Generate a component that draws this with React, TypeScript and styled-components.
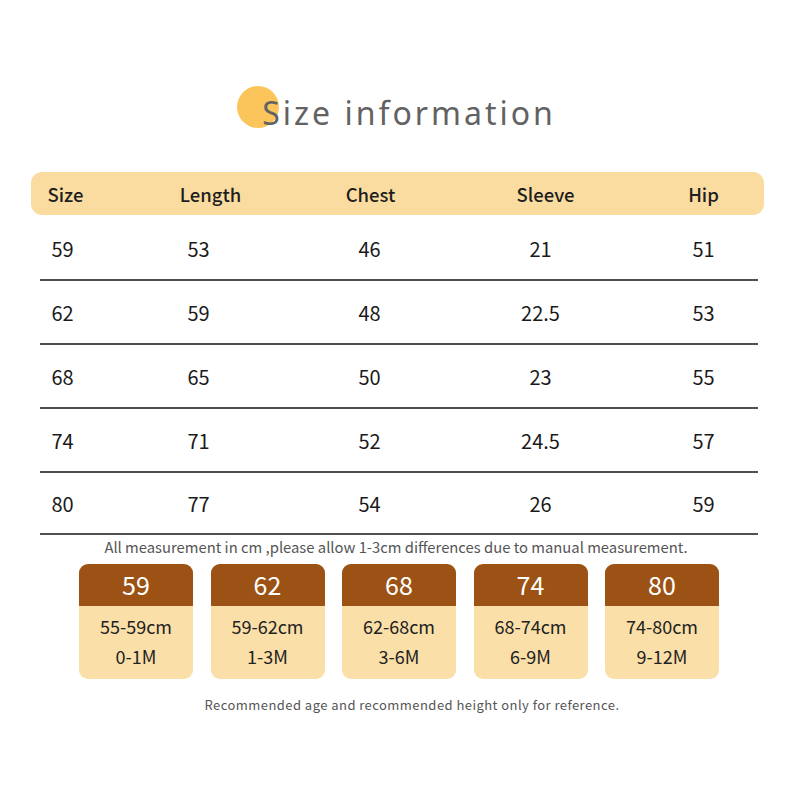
import React from "react";
import styled, { createGlobalStyle } from "styled-components";

const Global = createGlobalStyle`
  html, body { margin: 0; padding: 0; background: #ffffff; }
  body { width: 800px; height: 800px; overflow: hidden; }
`;

const Page = styled.div`
  width: 800px;
  height: 800px;
  background: #fff;
  display: flex;
  flex-direction: column;
  align-items: center;
  font-family: "Noto Sans CJK SC", "Noto Sans", sans-serif;
`;

const TitleRow = styled.div`
  margin-top: 88px;
  height: 50px;
  display: flex;
  align-items: center;
  justify-content: center;
  padding-left: 18px;
`;

const Title = styled.h1`
  position: relative;
  margin: 0;
  font-family: "Noto Sans", "DejaVu Sans", sans-serif;
  font-weight: 400;
  font-size: 32px;
  letter-spacing: 3px;
  color: #626262;
  line-height: 50px;
  &::before {
    content: "";
    position: absolute;
    left: -25px;
    top: -2px;
    width: 42px;
    height: 42px;
    border-radius: 50%;
    background: #fbc55c;
    z-index: 0;
  }
  span { position: relative; z-index: 1; }
`;

const Table = styled.div`
  margin-top: 34px;
  width: 733px;
  margin-left: -6px;
  display: flex;
  flex-direction: column;
  align-items: stretch;
`;

const HeaderBar = styled.div`
  display: grid;
  grid-template-columns: 70px 220px 100px 250px 66px;
  height: 43px;
  align-items: center;
  background: #fadca0;
  border-radius: 11px;
  margin-bottom: 2px;
`;

const HeadCell = styled.div`
  text-align: center;
  font-size: 18.5px;
  font-weight: 500;
  color: #1e1e1e;
`;

const Row = styled.div`
  display: grid;
  grid-template-columns: 46px 226px 116px 226px 100px;
  height: 62px;
  align-items: center;
  border-bottom: 2px solid #505050;
  margin: 0 6px 0 9px;
  &:last-child { height: 60px; }
`;

const Cell = styled.div`
  text-align: center;
  font-size: 20px;
  color: #1a1a1a;
`;

const Note = styled.p`
  margin: 2px 0 0 0;
  font-size: 14.8px;
  color: #555;
  line-height: 20px;
  padding-right: 8px;
`;

const Cards = styled.div`
  margin-top: 7px;
  display: flex;
  gap: 17.5px;
  margin-left: -2px;
`;

const Card = styled.div`
  width: 114px;
  height: 115px;
  border-radius: 9px;
  overflow: hidden;
  display: flex;
  flex-direction: column;
  background: #fadfa8;
`;

const CardTop = styled.div`
  height: 42px;
  padding-bottom: 3px;
  box-sizing: border-box;
  background: #9b5214;
  color: #fff;
  font-size: 25px;
  display: flex;
  align-items: center;
  justify-content: center;
`;

const CardBody = styled.div`
  flex: 1;
  display: flex;
  flex-direction: column;
  align-items: center;
  justify-content: center;
  gap: 3px;
  padding-bottom: 2px;
  font-size: 18px;
  color: #222;
  line-height: 27px;
`;

const Footer = styled.p`
  margin: 16px 0 0 0;
  font-size: 13px;
  letter-spacing: 0.45px;
  color: #555;
  line-height: 20px;
  padding-left: 24px;
`;

const headers = ["Size", "Length", "Chest", "Sleeve", "Hip"];

const rows = [
  ["59", "53", "46", "21", "51"],
  ["62", "59", "48", "22.5", "53"],
  ["68", "65", "50", "23", "55"],
  ["74", "71", "52", "24.5", "57"],
  ["80", "77", "54", "26", "59"],
];

const cards = [
  { n: "59", h: "55-59cm", a: "0-1M" },
  { n: "62", h: "59-62cm", a: "1-3M" },
  { n: "68", h: "62-68cm", a: "3-6M" },
  { n: "74", h: "68-74cm", a: "6-9M" },
  { n: "80", h: "74-80cm", a: "9-12M" },
];

export default function App() {
  return (
    <Page>
      <Global />
      <TitleRow>
        <Title>
          <span>Size information</span>
        </Title>
      </TitleRow>
      <Table>
        <HeaderBar>
          {headers.map((h) => (
            <HeadCell key={h}>{h}</HeadCell>
          ))}
        </HeaderBar>
        {rows.map((r, i) => (
          <Row key={i}>
            {r.map((v, j) => (
              <Cell key={j}>{v}</Cell>
            ))}
          </Row>
        ))}
      </Table>
      <Note>All measurement in cm ,please allow 1-3cm differences due to manual measurement.</Note>
      <Cards>
        {cards.map((c) => (
          <Card key={c.n}>
            <CardTop>{c.n}</CardTop>
            <CardBody>
              <span>{c.h}</span>
              <span>{c.a}</span>
            </CardBody>
          </Card>
        ))}
      </Cards>
      <Footer>Recommended age and recommended height only for reference.</Footer>
    </Page>
  );
}
